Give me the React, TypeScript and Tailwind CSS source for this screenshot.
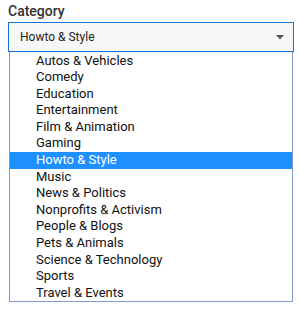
import React from 'react';

const categories = [
  'Autos & Vehicles',
  'Comedy',
  'Education',
  'Entertainment',
  'Film & Animation',
  'Gaming',
  'Howto & Style',
  'Music',
  'News & Politics',
  'Nonprofits & Activism',
  'People & Blogs',
  'Pets & Animals',
  'Science & Technology',
  'Sports',
  'Travel & Events',
];

const App: React.FC = () => {
  const selected = 'Howto & Style';

  return (
    <div className="w-[299px] h-[309px] bg-white font-['Roboto',sans-serif] pt-[3px]">
      <div className="pl-2 text-[14px] leading-[16px] font-medium text-[#333]">Category</div>

      {/* Select box */}
      <div className="mt-[3px] ml-2 w-[286px] h-[30px] border border-[#1a73d0] bg-[#f7f7f7] flex items-center justify-between pl-[11px] pr-[9px]">
        <span className="text-[12px] text-[#222]">{selected}</span>
        <svg width="8" height="5" viewBox="0 0 8 5">
          <path d="M0 0 L8 0 L4 4.5 Z" fill="#555" />
        </svg>
      </div>

      {/* Open list */}
      <div className="ml-[9px] w-[284px] border border-t-0 border-[#7f9ad0] bg-white pt-[0.5px]">
        {categories.map((c) => (
          <div
            key={c}
            className={`h-[16.6px] leading-[16.6px] pl-[26px] text-[13px] ${
              c === selected ? 'bg-[#1e90ff] text-white' : 'text-[#111]'
            }`}
          >
            {c}
          </div>
        ))}
      </div>
    </div>
  );
};

export default App;
